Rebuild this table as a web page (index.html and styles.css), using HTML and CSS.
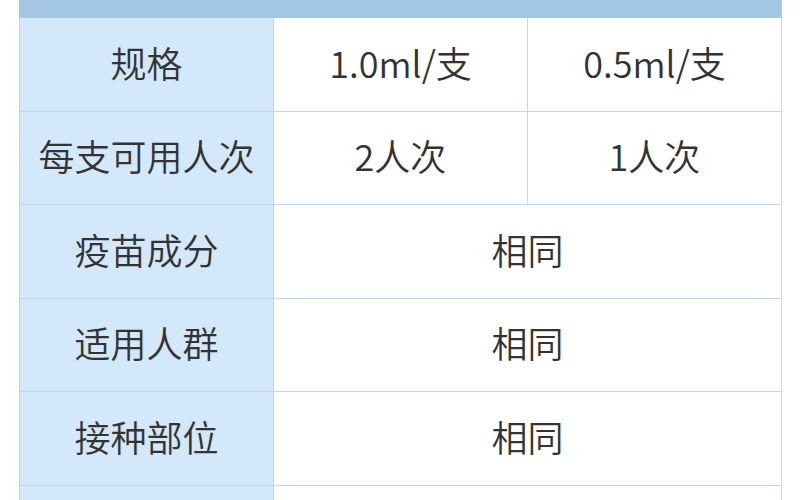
FILE: index.html
```html
<!DOCTYPE html>
<html lang="zh-CN">
<head>
<meta charset="utf-8">
<title>规格对比</title>
<link rel="stylesheet" href="styles.css">
</head>
<body>
<div class="page">
  <div class="table">
    <div class="head"></div>
    <div class="cell label">规格</div>
    <div class="cell">1.0ml/支</div>
    <div class="cell">0.5ml/支</div>
    <div class="cell label">每支可用人次</div>
    <div class="cell">2人次</div>
    <div class="cell">1人次</div>
    <div class="cell label">疫苗成分</div>
    <div class="cell span">相同</div>
    <div class="cell label">适用人群</div>
    <div class="cell span">相同</div>
    <div class="cell label">接种部位</div>
    <div class="cell span">相同</div>
    <div class="cell label"></div>
    <div class="cell span"></div>
  </div>
</div>
</body>
</html>
```
FILE: styles.css
```css
html, body {
  margin: 0;
  padding: 0;
  background: #ffffff;
  overflow: hidden;
}
.page {
  width: 800px;
  height: 500px;
  overflow: hidden;
  padding-left: 19px;
  box-sizing: border-box;
}
.table {
  width: 763px;
  box-sizing: border-box;
  display: grid;
  grid-template-columns: 253px 253px 253px;
  grid-template-rows: 17px repeat(6, 92.5px);
  column-gap: 1px;
  row-gap: 1px;
  background: #bcd9f1;
  border-left: 1px solid #b3d3ef;
  border-right: 1px solid #c3ddf3;
  font-family: "Noto Sans CJK SC", "Noto Sans", sans-serif;
  font-size: 36px;
  font-weight: 350;
  color: #333333;
}
.head {
  grid-column: 1 / 4;
  background: #a3c6e2;
  margin: 0 -1px -1px -1px;
}
.cell {
  background: #ffffff;
  display: flex;
  align-items: center;
  justify-content: center;
  line-height: 1;
  padding-bottom: 5px;
  box-sizing: border-box;
}
.label {
  background: #d3e8fb;
}
.span {
  grid-column: 2 / 4;
}
```
